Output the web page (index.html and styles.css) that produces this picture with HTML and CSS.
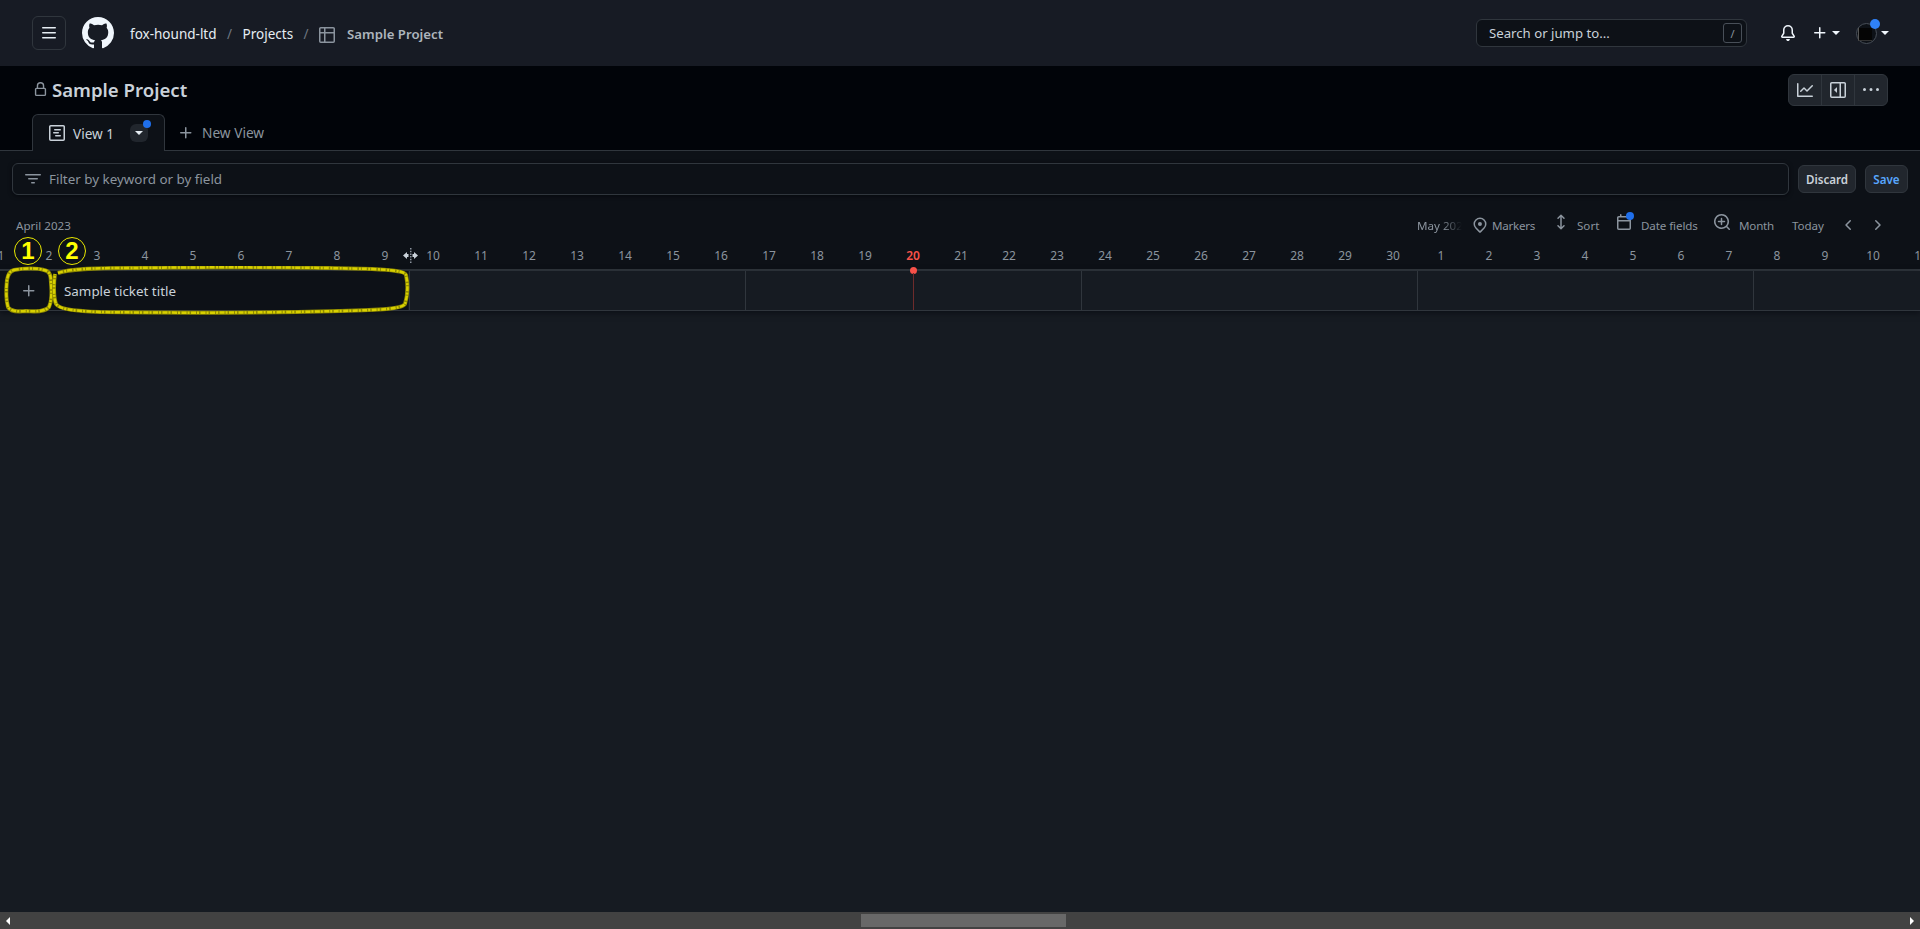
FILE: index.html
```html
<!DOCTYPE html>
<html lang="en">
<head>
    <meta charset="UTF-8">
    <title>Sample Project</title>
    <link rel="stylesheet" href="styles.css">
</head>
<body>
    <header class="topbar">
        <button class="menu-btn">
            <svg class="icon" viewBox="0 0 16 16"><path d="M1 2.75A.75.75 0 0 1 1.75 2h12.5a.75.75 0 0 1 0 1.5H1.75A.75.75 0 0 1 1 2.75Zm0 5A.75.75 0 0 1 1.75 7h12.5a.75.75 0 0 1 0 1.5H1.75A.75.75 0 0 1 1 7.75ZM1.75 12h12.5a.75.75 0 0 1 0 1.5H1.75a.75.75 0 0 1 0-1.5Z"/></svg>
        </button>
        <svg class="logo" viewBox="0 0 16 16"><path d="M8 0c4.42 0 8 3.58 8 8a8.013 8.013 0 0 1-5.45 7.59c-.4.08-.55-.17-.55-.38 0-.27.01-1.13.01-2.2 0-.75-.25-1.23-.54-1.48 1.78-.2 3.65-.88 3.65-3.95 0-.88-.31-1.59-.82-2.15.08-.2.36-1.02-.08-2.12 0 0-.67-.22-2.2.82-.64-.18-1.32-.27-2-.27-.68 0-1.36.09-2 .27-1.53-1.03-2.2-.82-2.2-.82-.44 1.1-.16 1.92-.08 2.12-.51.56-.82 1.28-.82 2.15 0 3.06 1.86 3.75 3.64 3.95-.23.2-.44.55-.51 1.07-.46.21-1.61.55-2.33-.66-.15-.24-.6-.83-1.23-.82-.67.01-.27.38.01.53.34.19.73.9.82 1.13.16.45.68 1.31 2.69.94 0 .67.01 1.3.01 1.49 0 .21-.15.45-.55.38A7.995 7.995 0 0 1 0 8c0-4.42 3.58-8 8-8Z"/></svg>
        <nav class="crumbs">
            <a>fox-hound-ltd</a>
            <span class="sep">/</span>
            <a>Projects</a>
            <span class="sep">/</span>
            <svg class="icon crumb-icon" viewBox="0 0 16 16"><path d="M0 1.75C0 .784.784 0 1.75 0h12.5C15.216 0 16 .784 16 1.75v12.5A1.75 1.75 0 0 1 14.25 16H1.75A1.75 1.75 0 0 1 0 14.25ZM6.5 6.5v8h7.75a.25.25 0 0 0 .25-.25V6.5Zm8-1.5V1.75a.25.25 0 0 0-.25-.25H6.5V5Zm-13 1.5v7.75c0 .138.112.25.25.25H5v-8ZM5 5V1.5H1.75a.25.25 0 0 0-.25.25V5Z"/></svg>
            <strong class="crumb-current">Sample Project</strong>
        </nav>
        <div class="search">
            <span>Search or jump to...</span>
            <kbd class="slash">/</kbd>
        </div>
        <svg class="icon bell" viewBox="0 0 16 16"><path d="M8 16c.9 0 1.7-.6 1.9-1.5.1-.3-.1-.5-.4-.5h-3c-.3 0-.5.2-.4.5.2.9 1 1.5 1.9 1.5ZM3 5a5 5 0 0 1 10 0v2.947c0 .05.015.098.042.139l1.703 2.555A1.519 1.519 0 0 1 13.482 13H2.518a1.516 1.516 0 0 1-1.263-2.36l1.703-2.554A.255.255 0 0 0 3 7.947Zm5-3.5A3.5 3.5 0 0 0 4.5 5v2.947c0 .346-.102.683-.294.97l-1.703 2.556a.017.017 0 0 0-.003.01l.001.006c0 .002.002.004.004.006l.006.004.007.001h10.964l.007-.001.006-.004.004-.006.001-.007a.017.017 0 0 0-.003-.01l-1.703-2.554a1.745 1.745 0 0 1-.294-.97V5A3.5 3.5 0 0 0 8 1.5Z"/></svg>
        <svg class="icon plus-top" viewBox="0 0 16 16"><path d="M7.75 2a.75.75 0 0 1 .75.75V7h4.25a.75.75 0 0 1 0 1.5H8.5v4.25a.75.75 0 0 1-1.5 0V8.5H2.75a.75.75 0 0 1 0-1.5H7V2.75A.75.75 0 0 1 7.75 2Z"/></svg>
        <span class="caret"></span>
        <span class="avatar"><span class="avatar-term"></span><span class="dot avatar-dot"></span></span>
        <span class="caret"></span>
    </header>

    <section class="project-head">
        <div class="title-row">
            <svg class="icon lock" viewBox="0 0 16 16"><path d="M4 4a4 4 0 0 1 8 0v2h.25c.966 0 1.75.784 1.75 1.75v5.5A1.75 1.75 0 0 1 12.25 15h-8.5A1.75 1.75 0 0 1 2 13.25v-5.5C2 6.784 2.784 6 3.75 6H4Zm8.25 3.5h-8.5a.25.25 0 0 0-.25.25v5.5c0 .138.112.25.25.25h8.5a.25.25 0 0 0 .25-.25v-5.5a.25.25 0 0 0-.25-.25ZM10.5 6V4a2.5 2.5 0 1 0-5 0v2Z"/></svg>
            <h1>Sample Project</h1>
            <div class="btn-group">
                <button><svg class="icon" viewBox="0 0 16 16"><path d="M1.5 1.75V13.5h13.75a.75.75 0 0 1 0 1.5H.75a.75.75 0 0 1-.75-.75V1.75a.75.75 0 0 1 1.5 0Zm14.28 2.53-5.25 5.25a.75.75 0 0 1-1.06 0L7 7.06 4.28 9.78a.751.751 0 0 1-1.042-.018.751.751 0 0 1-.018-1.042l3.25-3.25a.75.75 0 0 1 1.06 0L10 7.94l4.72-4.72a.751.751 0 0 1 1.042.018.751.751 0 0 1 .018 1.042Z"/></svg></button>
                <button><svg class="icon" viewBox="0 0 16 16"><path d="m4.177 7.823 2.396-2.396A.25.25 0 0 1 7 5.604v4.792a.25.25 0 0 1-.427.177L4.177 8.177a.25.25 0 0 1 0-.354Z"/><path d="M0 1.75C0 .784.784 0 1.75 0h12.5C15.216 0 16 .784 16 1.75v12.5A1.75 1.75 0 0 1 14.25 16H1.75A1.75 1.75 0 0 1 0 14.25Zm1.75-.25a.25.25 0 0 0-.25.25v12.5c0 .138.112.25.25.25H9.5v-13Zm12.5 13a.25.25 0 0 0 .25-.25V1.75a.25.25 0 0 0-.25-.25H11v13Z"/></svg></button>
                <button><svg class="icon" viewBox="0 0 16 16"><path d="M8 9a1.5 1.5 0 1 0 0-3 1.5 1.5 0 0 0 0 3ZM1.5 9a1.5 1.5 0 1 0 0-3 1.5 1.5 0 0 0 0 3Zm13 0a1.5 1.5 0 1 0 0-3 1.5 1.5 0 0 0 0 3Z"/></svg></button>
            </div>
        </div>
        <div class="tabs">
            <div class="tab">
                <svg class="icon" viewBox="0 0 16 16"><path d="M4.75 7a.75.75 0 0 0 0 1.5h4.5a.75.75 0 0 0 0-1.5h-4.5ZM5 4.75A.75.75 0 0 1 5.75 4h5.5a.75.75 0 0 1 0 1.5h-5.5A.75.75 0 0 1 5 4.75ZM6.75 10a.75.75 0 0 0 0 1.5h4.5a.75.75 0 0 0 0-1.5h-4.5Z"/><path d="M0 1.75C0 .784.784 0 1.75 0h12.5C15.216 0 16 .784 16 1.75v12.5A1.75 1.75 0 0 1 14.25 16H1.75A1.75 1.75 0 0 1 0 14.25V1.75Zm1.75-.25a.25.25 0 0 0-.25.25v12.5c0 .138.112.25.25.25h12.5a.25.25 0 0 0 .25-.25V1.75a.25.25 0 0 0-.25-.25H1.75Z"/></svg>
                <span class="tab-label">View 1</span>
                <span class="tab-menu"><span class="caret"></span><span class="dot tab-dot"></span></span>
            </div>
            <div class="new-view">
                <svg class="icon" viewBox="0 0 16 16"><path d="M7.75 2a.75.75 0 0 1 .75.75V7h4.25a.75.75 0 0 1 0 1.5H8.5v4.25a.75.75 0 0 1-1.5 0V8.5H2.75a.75.75 0 0 1 0-1.5H7V2.75A.75.75 0 0 1 7.75 2Z"/></svg>
                <span>New View</span>
            </div>
        </div>
    </section>

    <section class="filter-bar">
        <div class="filter-input">
            <svg class="icon" viewBox="0 0 16 16"><path d="M.75 3h14.5a.75.75 0 0 1 0 1.5H.75a.75.75 0 0 1 0-1.5ZM3 7.75A.75.75 0 0 1 3.75 7h8.5a.75.75 0 0 1 0 1.5h-8.5A.75.75 0 0 1 3 7.75Zm3 4a.75.75 0 0 1 .75-.75h2.5a.75.75 0 0 1 0 1.5h-2.5a.75.75 0 0 1-.75-.75Z"/></svg>
            <span>Filter by keyword or by field</span>
        </div>
        <button class="small-btn discard">Discard</button>
        <button class="small-btn save">Save</button>
    </section>

    <section class="roadmap-head">
        <div class="roadmap-tools">
            <span class="month-label">April 2023</span>
            <span class="month-label next-month">May 2023</span>
            <span class="tool tool-markers">
                <svg class="icon" viewBox="0 0 16 16"><path d="m12.596 11.596-3.535 3.536a1.5 1.5 0 0 1-2.122 0l-3.535-3.536a6.5 6.5 0 1 1 9.192-9.193 6.5 6.5 0 0 1 0 9.193Zm-1.06-8.132v-.001a5 5 0 1 0-7.072 7.072L8 14.07l3.536-3.534a5 5 0 0 0 0-7.072ZM8 9a2 2 0 1 1-.001-3.999A2 2 0 0 1 8 9Z"/></svg>
                Markers
            </span>
            <span class="tool tool-sort">
                <svg class="icon raised" viewBox="0 0 16 16"><path d="M8 .5a.75.75 0 0 1 .53.22l3 3a.75.75 0 0 1-1.06 1.06L8.75 3.06v9.88l1.72-1.72a.75.75 0 1 1 1.06 1.06l-3 3a.75.75 0 0 1-1.06 0l-3-3a.75.75 0 1 1 1.06-1.06l1.72 1.72V3.06L5.53 4.78a.75.75 0 0 1-1.06-1.06l3-3A.75.75 0 0 1 8 .5Z"/></svg>
                Sort
            </span>
            <span class="tool tool-fields">
                <span class="cal raised">
                    <svg class="icon" viewBox="0 0 16 16"><path d="M4.75 0a.75.75 0 0 1 .75.75V2h8.75c.966 0 1.75.784 1.75 1.75v0H15v10.5A1.75 1.75 0 0 1 13.25 16H2.75A1.75 1.75 0 0 1 1 14.25V3.75C1 2.784 1.784 2 2.75 2H4V.75A.75.75 0 0 1 4.75 0ZM2.5 7.5v6.75c0 .138.112.25.25.25h10.5a.25.25 0 0 0 .25-.25V7.5Zm10.75-4H2.75a.25.25 0 0 0-.25.25V6h11V3.75a.25.25 0 0 0-.25-.25Z"/></svg>
                    <span class="dot cal-dot"></span>
                </span>
                Date fields
            </span>
            <span class="tool tool-month">
                <svg class="icon raised" viewBox="0 0 16 16"><path d="M3.75 7.5a.75.75 0 0 1 .75-.75h2.25V4.5a.75.75 0 0 1 1.5 0v2.25h2.25a.75.75 0 0 1 0 1.5H8.25v2.25a.75.75 0 0 1-1.5 0V8.25H4.5a.75.75 0 0 1-.75-.75Z"/><path d="M7.5 0a7.5 7.5 0 0 1 5.807 12.247l2.473 2.473a.749.749 0 1 1-1.06 1.06l-2.473-2.473A7.5 7.5 0 1 1 7.5 0Zm-6 7.5a6 6 0 1 0 12 0 6 6 0 0 0-12 0Z"/></svg>
                Month
            </span>
            <span class="tool tool-today">Today</span>
            <svg class="icon chev" viewBox="0 0 16 16"><path d="M9.78 12.78a.75.75 0 0 1-1.06 0L4.47 8.53a.75.75 0 0 1 0-1.06l4.25-4.25a.751.751 0 0 1 1.042.018.751.751 0 0 1 .018 1.042L6.06 8l3.72 3.72a.75.75 0 0 1 0 1.06Z"/></svg>
            <svg class="icon chev" viewBox="0 0 16 16"><path d="M6.22 3.22a.75.75 0 0 1 1.06 0l4.25 4.25a.75.75 0 0 1 0 1.06l-4.25 4.25a.751.751 0 0 1-1.042-.018.751.751 0 0 1-.018-1.042L9.94 8 6.22 4.28a.75.75 0 0 1 0-1.06Z"/></svg>
        </div>
        <div class="days">
            <span>1</span><span>2</span><span>3</span><span>4</span><span>5</span><span>6</span><span>7</span><span>8</span><span>9</span><span>10</span>
            <span>11</span><span>12</span><span>13</span><span>14</span><span>15</span><span>16</span><span>17</span><span>18</span><span>19</span>
            <span class="today">20</span>
            <span>21</span><span>22</span><span>23</span><span>24</span><span>25</span><span>26</span><span>27</span><span>28</span><span>29</span><span>30</span>
            <span>1</span><span>2</span><span>3</span><span>4</span><span>5</span><span>6</span><span>7</span><span>8</span><span>9</span><span>10</span><span>11</span>
        </div>
    </section>

    <section class="row">
        <div class="row-add">
            <svg class="icon" viewBox="0 0 16 16"><path d="M7.75 2a.75.75 0 0 1 .75.75V7h4.25a.75.75 0 0 1 0 1.5H8.5v4.25a.75.75 0 0 1-1.5 0V8.5H2.75a.75.75 0 0 1 0-1.5H7V2.75A.75.75 0 0 1 7.75 2Z"/></svg>
        </div>
        <div class="row-title">Sample ticket title</div>
    </section>

    <main class="empty"></main>

    <div class="scrollbar">
        <span class="arrow arrow-left"></span>
        <span class="thumb"></span>
        <span class="arrow arrow-right"></span>
    </div>

    <!-- today marker and hand-drawn notes lie over the grid -->
    <span class="today-dot"></span>
    <span class="today-line"></span>
    <svg class="drag" viewBox="0 0 15 15">
        <path d="M7 0h1.5v1.5H7zM7 2.7h1.5v1.5H7zM7 5.4h1.5v1.5H7zM7 8.1h1.5v1.5H7zM7 10.8h1.5v1.5H7zM7 13.5h1.5V15H7z" fill="#8b949e"/>
        <path d="M0 7.5l4-3.5v2h1.5v3H4v2zM15 7.5l-4-3.5v2H9.5v3H11v2z" fill="#c9d1d9"/>
    </svg>
    <svg class="notes" viewBox="0 0 420 60" fill="none">
        <path class="scribble-base" d="M14 4 C24 2 38 2 44 4 C50 5 51 10 51 17 C52 27 51 37 49 41 C46 45 36 46 26 45 C18 46 10 45 8 41 C6 34 6 23 7 14 C8 8 10 5 14 4Z"/>
        <path class="scribble" d="M14 4 C24 2 38 2 44 4 C50 5 51 10 51 17 C52 27 51 37 49 41 C46 45 36 46 26 45 C18 46 10 45 8 41 C6 34 6 23 7 14 C8 8 10 5 14 4Z"/>
        <path class="scribble-base" d="M58 7 C70 3 90 2 130 2 C200 1 300 1 372 3 C392 4 405 5 406 9 C408 18 408 28 405 38 C402 43 380 44 340 45 C260 47 170 47 100 46 C78 45 60 44 56 38 C53 30 54 14 55 8"/>
        <path class="scribble" d="M58 7 C70 3 90 2 130 2 C200 1 300 1 372 3 C392 4 405 5 406 9 C408 18 408 28 405 38 C402 43 380 44 340 45 C260 47 170 47 100 46 C78 45 60 44 56 38 C53 30 54 14 55 8"/>
    </svg>
    <span class="badge badge-one">1</span>
    <span class="badge badge-two">2</span>
</body>
</html>
```

FILE: styles.css
```css
*{
    box-sizing: border-box;
}
body{
    margin: 0;
    width: 1920px;
    height: 929px;
    overflow: hidden;
    display: flex;
    flex-direction: column;
    position: relative;
    background-color: #161b22;
    color: #c9d1d9;
    font-family: "Noto Sans", "Liberation Sans", sans-serif;
    font-size: 14px;
}
button{
    font-family: inherit;
    outline: none;
}
.icon{
    width: 16px;
    height: 16px;
    flex: none;
    fill: currentColor;
    display: block;
}
.dot{
    position: absolute;
    border-radius: 50%;
    background-color: #1f6feb;
}
.caret{
    width: 0;
    height: 0;
    flex: none;
    border-left: 4px solid transparent;
    border-right: 4px solid transparent;
    border-top: 4px solid currentColor;
}

/* top bar */
.topbar{
    height: 66px;
    flex: none;
    display: flex;
    align-items: center;
    padding: 0 31px 0 32px;
    background-color: #171b24;
    color: #f0f6fc;
}
.menu-btn{
    width: 34px;
    height: 34px;
    display: flex;
    align-items: center;
    justify-content: center;
    padding: 0;
    color: #e6edf3;
    background: none;
    border: 1px solid #30363d;
    border-radius: 6px;
}
.logo{
    width: 32px;
    height: 32px;
    margin-left: 16px;
    fill: #f0f6fc;
}
.crumbs{
    display: flex;
    align-items: center;
    margin-left: 16px;
    margin-top: 2px;
    font-size: 13.5px;
    color: #e6edf3;
}
.sep{
    width: 26px;
    text-align: center;
    color: #6e7681;
}
.crumb-icon{
    color: #8b949e;
    margin: 1px 12px 0 0;
}
.crumb-current{
    font-size: 13.2px;
    font-weight: 600;
    color: #adb5bd;
}
.search{
    width: 271px;
    height: 28px;
    margin-left: auto;
    display: flex;
    align-items: center;
    justify-content: space-between;
    padding: 0 4px 0 12px;
    font-size: 13.2px;
    color: #c9d1d9;
    background-color: #0d1117;
    border: 1px solid #30363d;
    border-radius: 6px;
}
.slash{
    width: 19px;
    height: 20px;
    display: flex;
    align-items: center;
    justify-content: center;
    font-family: inherit;
    font-size: 11px;
    color: #8b949e;
    border: 1px solid #484f58;
    border-radius: 3px;
}
.bell{
    margin-left: 33px;
}
.plus-top{
    margin-left: 16px;
}
.topbar .caret{
    margin-left: 4px;
}
.avatar{
    width: 21px;
    height: 21px;
    margin-left: 16px;
    position: relative;
    background-color: #0d1117;
    border-radius: 50%;
    border: 1px solid #484f58;
}
.avatar-term{
    position: absolute;
    left: 1px;
    top: 4px;
    width: 14px;
    height: 13px;
    background-color: #050505;
    border-left: 1px solid #555;
    border-bottom: 1px solid #333;
}
.avatar-dot{
    width: 10px;
    height: 10px;
    top: -5px;
    right: -4px;
    background-color: #2f81f7;
}

/* project title and view tabs */
.project-head{
    height: 85px;
    flex: none;
    padding: 8px 32px 0;
    background-color: #010409;
    border-bottom: 1px solid #30363d;
}
.title-row{
    height: 32px;
    display: flex;
    align-items: center;
}
.lock{
    color: #8b949e;
    margin: -2px 4px 0 1px;
    width: 15px;
    height: 15px;
}
h1{
    margin: -2px 0 0;
    font-size: 18.6px;
    font-weight: 600;
    color: #c9d1d9;
}
.btn-group{
    margin-left: auto;
    display: flex;
    height: 32px;
    background-color: #21262d;
    border: 1px solid #30363d;
    border-radius: 6px;
}
.btn-group button{
    width: 33px;
    display: flex;
    align-items: center;
    justify-content: center;
    padding: 0;
    color: #c9d1d9;
    background: none;
    border: none;
    border-right: 1px solid #30363d;
}
.btn-group button:last-child{
    width: 32px;
    border-right: none;
}
.tabs{
    height: 37px;
    margin-top: 8px;
    display: flex;
}
.tab{
    width: 133px;
    height: 37px;
    display: flex;
    align-items: center;
    padding-left: 16px;
    font-size: 13.6px;
    color: #c9d1d9;
    background-color: #0d1117;
    border: 1px solid #30363d;
    border-bottom: none;
    border-radius: 6px 6px 0 0;
}
.tab-label{
    margin-left: 8px;
}
.tab-menu{
    width: 18px;
    height: 18px;
    margin-left: auto;
    margin-right: 16px;
    position: relative;
    display: flex;
    align-items: center;
    justify-content: center;
    color: #e6edf3;
    background-color: #21262d;
    border-radius: 6px;
}
.tab-dot{
    width: 8px;
    height: 8px;
    top: -4px;
    right: -3px;
}
.new-view{
    display: flex;
    align-items: center;
    margin-left: 13px;
    gap: 8px;
    font-size: 13.7px;
    color: #8b949e;
}

/* filter */
.filter-bar{
    height: 58px;
    flex: none;
    display: flex;
    align-items: center;
    padding: 0 12px 2px;
    background-color: #0d1117;
}
.filter-input{
    flex: 1;
    height: 32px;
    display: flex;
    align-items: center;
    gap: 8px;
    padding-left: 12px;
    font-size: 13.4px;
    color: #8b949e;
    background-color: #0d1117;
    border: 1px solid #30363d;
    border-radius: 6px;
    box-shadow: 0 1px 4px rgba(1, 4, 9, .6);
}
.small-btn{
    height: 28px;
    margin-left: 9px;
    padding: 0;
    font-size: 11.6px;
    font-weight: 600;
    color: #c9d1d9;
    background-color: #21262d;
    border: 1px solid #30363d;
    border-radius: 6px;
}
.discard{
    width: 58px;
}
.save{
    width: 43px;
    color: #58a6ff;
}

/* roadmap header */
.roadmap-head{
    height: 62px;
    flex: none;
    background-color: #0d1117;
    border-bottom: 2px solid #30363d;
    overflow: hidden;
}
.roadmap-tools{
    height: 32px;
    display: flex;
    align-items: center;
    padding: 0 35px 0 16px;
    font-size: 11.6px;
    color: #8b949e;
}
.next-month{
    width: 45px;
    margin-left: auto;
    white-space: nowrap;
    overflow: hidden;
    -webkit-mask-image: linear-gradient(to right, #000 55%, transparent);
    mask-image: linear-gradient(to right, #000 55%, transparent);
}
.tool{
    flex: none;
    display: flex;
    align-items: center;
    white-space: nowrap;
}
.raised{
    margin-bottom: 6px;
}
.tool-markers{
    width: 81px;
    margin-left: 10px;
    gap: 4px;
    letter-spacing: -.25px;
}
.tool-sort{
    width: 63px;
    gap: 8px;
}
.tool-fields{
    width: 98px;
    gap: 9px;
    letter-spacing: -.1px;
}
.tool-month{
    width: 78px;
    gap: 9px;
    letter-spacing: -.2px;
}
.tool-today{
    width: 49px;
    letter-spacing: -.1px;
}
.chev{
    margin-left: 12px;
}
.tool-today + .chev{
    margin-left: 0;
}
.cal{
    position: relative;
}
.cal-dot{
    width: 8px;
    height: 8px;
    top: -2px;
    right: -2px;
}
.days{
    display: flex;
    height: 28px;
    margin-left: -23px;
    padding-top: 6px;
    font-size: 12px;
    color: #8b949e;
}
.days span{
    width: 48px;
    flex: none;
    text-align: center;
}
.days .today{
    color: #f85149;
    font-weight: 600;
}

/* the one ticket row */
.row{
    height: 40px;
    flex: none;
    display: flex;
    background-color: #161b22;
    border-bottom: 1px solid #30363d;
    box-shadow: 0 2px 6px rgba(1, 4, 9, .5);
    background-image: repeating-linear-gradient(to right, #30363d 0, #30363d 1px, transparent 1px, transparent 336px);
    background-position: 73px 0;
}
.row-add{
    width: 54px;
    display: flex;
    align-items: center;
    justify-content: center;
    padding-left: 4px;
    color: #8b949e;
    background-color: #0d1117;
}
.row-title{
    width: 354px;
    display: flex;
    align-items: center;
    padding-left: 10px;
    font-size: 13.4px;
    color: #c9d1d9;
    background-color: #0d1117;
}
.empty{
    flex: 1;
}

/* scrollbar drawn by hand, it is part of the picture */
.scrollbar{
    height: 17px;
    flex: none;
    display: flex;
    align-items: center;
    justify-content: space-between;
    position: relative;
    padding: 0 6px;
    background-color: #424242;
}
.thumb{
    position: absolute;
    left: 861px;
    top: 2px;
    width: 205px;
    height: 13px;
    background-color: #686868;
}
.arrow{
    width: 0;
    height: 0;
    border-top: 4px solid transparent;
    border-bottom: 4px solid transparent;
}
.arrow-left{
    border-right: 4px solid #fff;
}
.arrow-right{
    border-left: 4px solid #fff;
}

/* overlays */
.today-dot{
    position: absolute;
    left: 910px;
    top: 267px;
    width: 7px;
    height: 7px;
    background-color: #f85149;
    border-radius: 50%;
}
.today-line{
    position: absolute;
    left: 913px;
    top: 273px;
    width: 1px;
    height: 37px;
    background-color: #6e2b2b;
}
.drag{
    position: absolute;
    left: 403px;
    top: 248px;
    width: 15px;
    height: 15px;
}
.notes{
    position: absolute;
    left: 0;
    top: 266px;
    width: 420px;
    height: 60px;
}
.scribble-base{
    stroke: #8f8a00;
    stroke-width: 4;
    stroke-linejoin: round;
}
.scribble{
    stroke: #d8d000;
    stroke-width: 2.5;
    stroke-linejoin: round;
    stroke-dasharray: 5 1.5 2 1;
}
.badge{
    position: absolute;
    top: 237px;
    width: 28px;
    height: 28px;
    display: flex;
    align-items: center;
    justify-content: center;
    font-family: "Liberation Sans", sans-serif;
    font-size: 24px;
    font-weight: 700;
    color: #ffff00;
    border: 1px solid #e8e800;
    border-radius: 50%;
}
.badge-one{
    left: 14px;
}
.badge-two{
    left: 58px;
}
```
